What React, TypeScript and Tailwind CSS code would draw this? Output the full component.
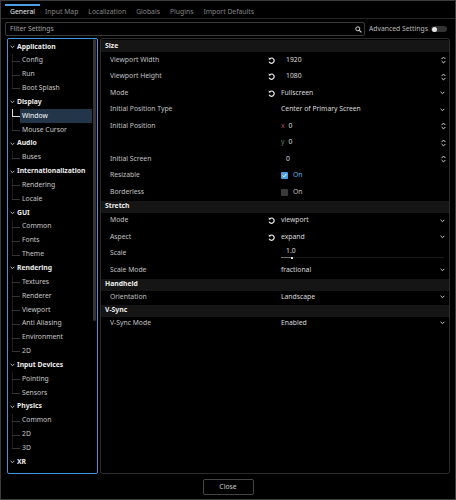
import React from 'react';

const TABS = ['General', 'Input Map', 'Localization', 'Globals', 'Plugins', 'Import Defaults'];

interface TreeItem {
  label: string;
  cat?: boolean;
  selected?: boolean;
  last?: boolean;
}

const TREE: TreeItem[] = [
  { label: 'Application', cat: true },
  { label: 'Config' },
  { label: 'Run' },
  { label: 'Boot Splash', last: true },
  { label: 'Display', cat: true },
  { label: 'Window', selected: true },
  { label: 'Mouse Cursor', last: true },
  { label: 'Audio', cat: true },
  { label: 'Buses', last: true },
  { label: 'Internationalization', cat: true },
  { label: 'Rendering' },
  { label: 'Locale', last: true },
  { label: 'GUI', cat: true },
  { label: 'Common' },
  { label: 'Fonts' },
  { label: 'Theme', last: true },
  { label: 'Rendering', cat: true },
  { label: 'Textures' },
  { label: 'Renderer' },
  { label: 'Viewport' },
  { label: 'Anti Aliasing' },
  { label: 'Environment' },
  { label: '2D', last: true },
  { label: 'Input Devices', cat: true },
  { label: 'Pointing' },
  { label: 'Sensors', last: true },
  { label: 'Physics', cat: true },
  { label: 'Common' },
  { label: '2D' },
  { label: '3D', last: true },
  { label: 'XR', cat: true },
];

type Kind = 'spin' | 'drop' | 'vec' | 'check' | 'slider';

interface Prop {
  label: string;
  kind: Kind;
  value: string;
  revert?: boolean;
  axis?: 'x' | 'y';
  checked?: boolean;
  short?: boolean;
}

interface Section {
  title: string;
  props: Prop[];
}

const SECTIONS: Section[] = [
  {
    title: 'Size',
    props: [
      { label: 'Viewport Width', kind: 'spin', value: '1920', revert: true },
      { label: 'Viewport Height', kind: 'spin', value: '1080', revert: true },
      { label: 'Mode', kind: 'drop', value: 'Fullscreen', revert: true },
      { label: 'Initial Position Type', kind: 'drop', value: 'Center of Primary Screen' },
      { label: 'Initial Position', kind: 'vec', value: '0', axis: 'x' },
      { label: '', kind: 'vec', value: '0', axis: 'y' },
      { label: 'Initial Screen', kind: 'spin', value: '0' },
      { label: 'Resizable', kind: 'check', value: 'On', checked: true },
      { label: 'Borderless', kind: 'check', value: 'On' },
    ],
  },
  {
    title: 'Stretch',
    props: [
      { label: 'Mode', kind: 'drop', value: 'viewport', revert: true },
      { label: 'Aspect', kind: 'drop', value: 'expand', revert: true },
      { label: 'Scale', kind: 'slider', value: '1.0' },
      { label: 'Scale Mode', kind: 'drop', value: 'fractional' },
    ],
  },
  {
    title: 'Handheld',
    props: [{ label: 'Orientation', kind: 'drop', value: 'Landscape', short: true }],
  },
  {
    title: 'V-Sync',
    props: [{ label: 'V-Sync Mode', kind: 'drop', value: 'Enabled', short: true }],
  },
];

function Chevron({ color = '#cfcfcf' }: { color?: string }) {
  return (
    <svg width="5" height="4" viewBox="0 0 5 4" className="shrink-0">
      <polyline points="0.6,0.8 2.5,2.7 4.4,0.8" fill="none" stroke={color} strokeWidth="1" />
    </svg>
  );
}

function Spinner() {
  return (
    <svg width="5" height="8" viewBox="0 0 5 8" className="shrink-0">
      <polyline points="0.6,3 2.5,1.1 4.4,3" fill="none" stroke="#d6d6d6" strokeWidth="1" />
      <polyline points="0.6,5 2.5,6.9 4.4,5" fill="none" stroke="#d6d6d6" strokeWidth="1" />
    </svg>
  );
}

function Revert() {
  return (
    <svg width="7" height="7" viewBox="0 0 8 8" className="shrink-0">
      <path d="M1.6 2.4 A3 3 0 1 1 1.3 5.4" fill="none" stroke="#e6e6e6" strokeWidth="1.4" />
      <path d="M0.6 0.6 L1.2 3.2 L3.6 2.2 Z" fill="#e6e6e6" />
    </svg>
  );
}

function TreeRow({ item }: { item: TreeItem }) {
  if (item.cat) {
    return (
      <div className="h-[13.85px] flex items-center shrink-0 whitespace-nowrap">
        <span className="ml-[2px] mr-[2px] flex">
          <Chevron color="#bdbdbd" />
        </span>
        <span className="font-bold text-[#ececec]">{item.label}</span>
      </div>
    );
  }
  const line = item.selected ? 'border-[#d8d8d8]' : 'border-[#1e1e1e]';
  return (
    <div className="h-[13.85px] flex shrink-0 whitespace-nowrap">
      <div className="w-[12px] relative shrink-0">
        {/* tree connector */}
        <span className={`absolute left-[4px] top-0 h-1/2 border-l ${line}`} />
        {!item.last && <span className="absolute left-[4px] top-1/2 h-1/2 border-l border-[#1e1e1e]" />}
        <span
          className={`absolute left-[4px] right-0 top-1/2 border-t ${
            item.selected ? 'border-[#d8d8d8]' : 'border-[#343434]'
          }`}
        />
      </div>
      <div
        className={`flex-1 flex items-center pl-[2px] ${
          item.selected ? 'bg-[#233649] text-white' : 'text-[#c9c9c9]'
        }`}
      >
        {item.label}
      </div>
    </div>
  );
}

function PropValue({ p }: { p: Prop }) {
  if (p.kind === 'spin') {
    return (
      <div className="flex-1 flex items-center justify-between pl-[6px] text-[#dcdcdc]">
        <span>{p.value}</span>
        <Spinner />
      </div>
    );
  }
  if (p.kind === 'drop') {
    return (
      <div className="flex-1 flex items-center justify-between pl-[1px] text-[#dcdcdc]">
        <span>{p.value}</span>
        <span className="pr-[1px]">
          <Chevron />
        </span>
      </div>
    );
  }
  if (p.kind === 'vec') {
    return (
      <div className="flex-1 flex items-center justify-between pl-[1px] text-[#dcdcdc]">
        <span className="flex gap-[4px]">
          <span className={p.axis === 'x' ? 'text-[#a84c4c]' : 'text-[#4f9258]'}>{p.axis}</span>
          <span>{p.value}</span>
        </span>
        <Spinner />
      </div>
    );
  }
  if (p.kind === 'check') {
    return (
      <div className="flex-1 flex items-center gap-[5px] pl-[1px]">
        {p.checked ? (
          <span className="w-[7px] h-[7px] rounded-[1px] bg-[#4b9fe6] flex items-center justify-center">
            <svg width="5" height="5" viewBox="0 0 5 5">
              <polyline points="0.6,2.6 1.9,3.9 4.4,0.9" fill="none" stroke="#fff" strokeWidth="1" />
            </svg>
          </span>
        ) : (
          <span className="w-[7px] h-[7px] rounded-[1px] bg-[#3a3a3a]" />
        )}
        <span className={p.checked ? 'text-[#5fb2f2]' : 'text-[#c4c4c4]'}>{p.value}</span>
      </div>
    );
  }
  return (
    <div className="flex-1 flex flex-col justify-center pl-[1px] pr-[2px] text-[#dcdcdc]">
      <span className="pl-[5px] -mt-[1px]">{p.value}</span>
      <div className="mt-[2px] h-[1px] bg-[#181818] flex items-center">
        <div className="w-[10px] h-[1px] bg-[#707070]" />
        <div className="w-[2px] h-[2px] bg-[#e0e0e0]" />
      </div>
    </div>
  );
}

function PropRow({ p }: { p: Prop }) {
  return (
    <div className={`${p.short ? 'h-[14px]' : 'h-[16.5px]'} flex items-center shrink-0 pr-[3px] whitespace-nowrap`}>
      <div className="w-[167px] pl-[9px] text-[#c2c2c2] shrink-0">{p.label}</div>
      <div className="w-[12px] shrink-0 flex">{p.revert && <Revert />}</div>
      <PropValue p={p} />
    </div>
  );
}

export default function App() {
  return (
    <div className="w-[456px] h-[500px] bg-black border border-[#3c3c3c] flex flex-col text-[6.8px] leading-none font-['Noto_Sans',sans-serif] overflow-hidden">
      {/* tabs */}
      <div className="h-[18px] shrink-0 flex items-end pl-[4px] border-b border-[#262626]">
        {TABS.map((t, i) => (
          <div
            key={t}
            className={`h-[14px] px-[5px] flex items-center border-t-2 whitespace-nowrap ${
              i === 0 ? 'border-[#4a9fe6] text-[#ececec]' : 'border-transparent text-[#858585]'
            }`}
          >
            {t}
          </div>
        ))}
      </div>

      {/* filter */}
      <div className="mt-[3px] h-[14px] shrink-0 flex items-center whitespace-nowrap">
        <div className="ml-[4px] w-[360px] h-full border border-[#3a3a3a] rounded-[2px] flex items-center justify-between pl-[4px] pr-[2px]">
          <span className="text-[#a6a6a6]">Filter Settings</span>
          <svg width="7" height="7" viewBox="0 0 7 7">
            <circle cx="2.8" cy="2.8" r="2" fill="none" stroke="#d8d8d8" strokeWidth="1" />
            <line x1="4.3" y1="4.3" x2="6.4" y2="6.4" stroke="#d8d8d8" strokeWidth="1.2" />
          </svg>
        </div>
        <span className="ml-[4px] text-[#bcbcbc]">Advanced Settings</span>
        <div className="ml-auto mr-[8px] w-[16px] h-[6px] rounded-full bg-[#333] flex items-center">
          <span className="ml-[1px] w-[5px] h-[5px] rounded-full bg-[#e6e6e6]" />
        </div>
      </div>

      {/* main */}
      <div className="mt-[2px] h-[436px] shrink-0 flex gap-[2px] ml-[6px] mr-[5px]">
        <div className="w-[91px] border border-[#3f96e2] rounded-[2px] flex overflow-hidden">
          <div className="flex-1 flex flex-col pt-[1px] pr-[1px] overflow-hidden">
            {TREE.map((item, i) => (
              <TreeRow key={i} item={item} />
            ))}
          </div>
          <div className="w-[3px] mr-[1px] flex flex-col">
            <div className="h-[282px] bg-[#353535] rounded-full" />
          </div>
        </div>

        <div className="flex-1 border border-[#2c2c2c] rounded-[3px] flex flex-col pt-[1px] overflow-hidden">
          {SECTIONS.map((s) => (
            <div key={s.title} className="flex flex-col">
              <div className="h-[12px] bg-[#151515] flex items-center pl-[4px] font-bold text-[#ececec]">
                {s.title}
              </div>
              {s.props.map((p, i) => (
                <PropRow key={i} p={p} />
              ))}
            </div>
          ))}
        </div>
      </div>

      {/* footer */}
      <div className="mt-[5px] flex justify-center">
        <button className="w-[51px] h-[16px] border border-[#454545] rounded-[2px] text-[#cfcfcf] flex items-center justify-center">
          Close
        </button>
      </div>
    </div>
  );
}
